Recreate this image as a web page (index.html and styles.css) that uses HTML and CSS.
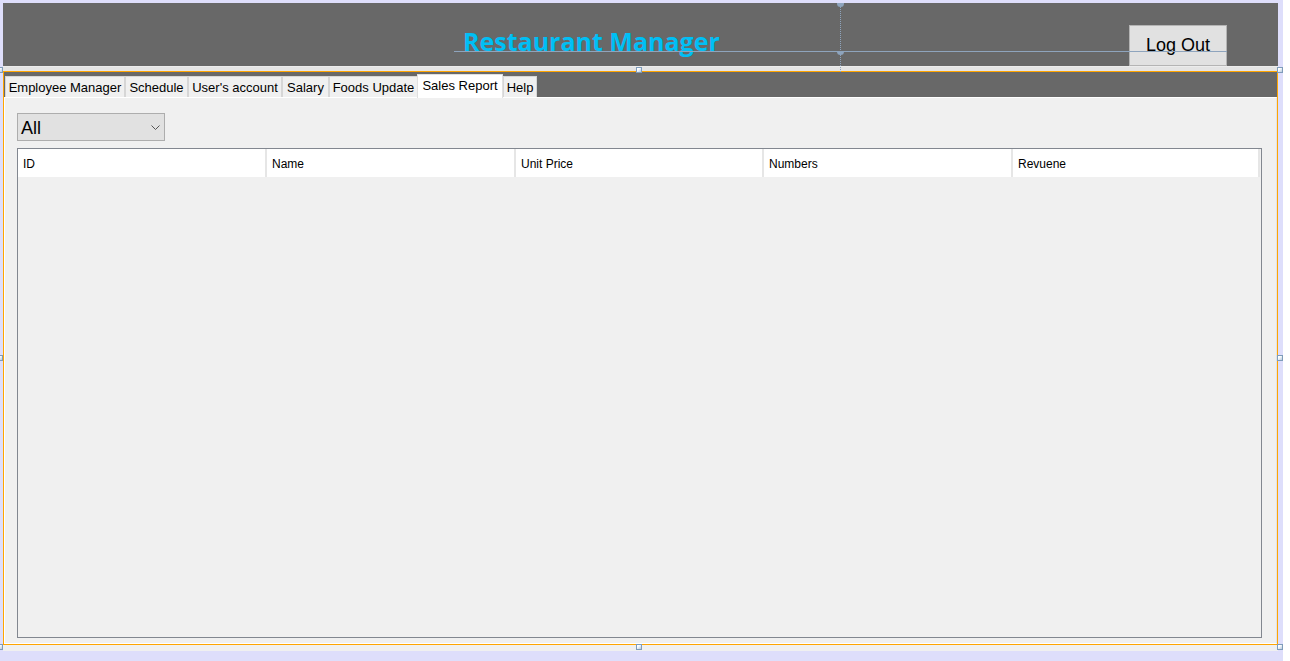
FILE: index.html
```html
<!DOCTYPE html>
<html>
<head>
<meta charset="utf-8">
<title>Restaurant Manager</title>
<link rel="stylesheet" href="styles.css">
</head>
<body>
<div class="designer">
  <div class="form">
    <header class="header">
      <h1 class="title">Restaurant Manager</h1>
      <button class="logout" type="button">Log Out</button>
    </header>
    <div class="band"></div>
    <div class="tabcontrol">
      <div class="tabstrip">
        <div class="tab tab-em">Employee Manager</div>
        <div class="tab tab-sched">Schedule</div>
        <div class="tab tab-user">User's account</div>
        <div class="tab tab-salary">Salary</div>
        <div class="tab tab-foods">Foods Update</div>
        <div class="tab tab-sales active">Sales Report</div>
        <div class="tab tab-help">Help</div>
      </div>
      <div class="tabpage">
        <div class="combo">
          <span class="combo-text">All</span>
          <svg class="chev" width="9" height="5" viewBox="0 0 9 5"><polyline points="0.5,0.5 4.5,4.5 8.5,0.5" fill="none" stroke="#555" stroke-width="1"/></svg>
        </div>
        <div class="grid">
          <div class="grid-head">
            <div class="hcell c1">ID</div>
            <div class="hcell c2">Name</div>
            <div class="hcell c3">Unit Price</div>
            <div class="hcell c4">Numbers</div>
            <div class="hcell c5">Revuene</div>
          </div>
        </div>
      </div>
    </div>
  </div>

  <div class="snap-h"></div>
  <div class="snap-v"></div>
  <div class="snap-dot dot-top"></div>
  <div class="snap-dot dot-mid"></div>

  <div class="handle h-tl"></div>
  <div class="handle h-tm"></div>
  <div class="handle h-tr"></div>
  <div class="handle h-ml"></div>
  <div class="handle h-mr"></div>
  <div class="handle h-bl"></div>
  <div class="handle h-bm"></div>
  <div class="handle h-br"></div>
</div>
</body>
</html>
```
FILE: styles.css
```css
html, body {
  margin: 0;
  padding: 0;
  background: #ffffff;
  overflow: hidden;
}

.designer {
  position: relative;
  width: 1283px;
  height: 661px;
  box-sizing: border-box;
  padding: 3px 0 0 3px;
  background: #dedefb;
  font-family: "Liberation Sans", Arial, sans-serif;
}

.form {
  width: 1275px;
  height: 648px;
  background: #f0f0f0;
  display: flex;
  flex-direction: column;
}

.header {
  height: 63px;
  flex: none;
  background: #686868;
  display: flex;
  align-items: flex-start;
}

.title {
  margin: 26px 0 0 460px;
  font-family: "Open Sans", "Noto Sans", sans-serif;
  font-weight: 700;
  font-size: 25px;
  line-height: 1;
  color: #00bff5;
  white-space: nowrap;
}

.logout {
  margin: 22px 51px 0 auto;
  width: 98px;
  height: 41px;
  padding: 0;
  border: 1px solid #b4b4b4;
  background: #e1e1e1;
  font-family: "Liberation Sans", Arial, sans-serif;
  font-size: 18px;
  color: #000;
}

.band {
  height: 5px;
  flex: none;
  background: #e4e4e4;
  border-top: 1px solid #ececec;
  box-sizing: border-box;
}

.tabcontrol {
  width: 1275px;
  height: 574px;
  flex: none;
  box-sizing: border-box;
  border: 1px solid #ffa500;
  display: flex;
  flex-direction: column;
}

.tabstrip {
  height: 25px;
  flex: none;
  background: #686868;
  display: flex;
  align-items: flex-end;
  padding-left: 1px;
}

.tab {
  height: 21px;
  box-sizing: border-box;
  border: 1px solid #d6d6d6;
  border-bottom: none;
  background: #f0f0f0;
  font-size: 13px;
  line-height: 21px;
  color: #000;
  text-align: center;
  white-space: nowrap;
}

.tab-em { width: 120px; }
.tab-sched { width: 63px; }
.tab-user { width: 94px; }
.tab-salary { width: 47px; }
.tab-foods { width: 89px; }
.tab-help { width: 34px; }

.tab.active {
  width: 86px;
  height: 24px;
  margin-left: -1px;
  margin-bottom: -1px;
  background: #ffffff;
  border-color: #e0e0e0;
  line-height: 21px;
  position: relative;
  z-index: 1;
}

.tabpage {
  flex: 1;
  box-sizing: border-box;
  border: 1px solid #ffffff;
  border-right-color: #e3e3e3;
  background: #f0f0f0;
  padding: 15px 0 0 12px;
}

.combo {
  width: 148px;
  height: 28px;
  box-sizing: border-box;
  border: 1px solid #adadad;
  background: #e1e1e1;
  display: flex;
  align-items: center;
  justify-content: space-between;
  padding: 1px 4px 0 3px;
}

.combo-text {
  font-size: 18px;
  color: #000;
  line-height: 1;
}

.chev {
  display: block;
  margin-top: 0;
}

.grid {
  margin-top: 7px;
  width: 1245px;
  height: 490px;
  box-sizing: border-box;
  border: 1px solid #828790;
  background: #f0f0f0;
}

.grid-head {
  display: grid;
  grid-template-columns: 249px 249px 248px 249px 247px;
  height: 28px;
}

.hcell {
  background: #ffffff;
  border-right: 2px solid #e6e6e6;
  font-size: 12px;
  line-height: 25px;
  padding: 3px 0 0 5px;
  color: #000;
  white-space: nowrap;
}

/* designer overlays */
.snap-h {
  position: absolute;
  left: 454px;
  top: 51px;
  width: 773px;
  height: 1px;
  background: #8ea4bd;
}

.snap-v {
  position: absolute;
  left: 840px;
  top: 3px;
  height: 69px;
  border-left: 1px dotted #8ea4bd;
}

.snap-dot {
  position: absolute;
  width: 7px;
  height: 4px;
  border-radius: 0 0 4px 4px;
  background: #8ea4bd;
}

.dot-top { left: 837px; top: 3px; }
.dot-mid { left: 837px; top: 51px; }

.handle {
  position: absolute;
  width: 6px;
  height: 6px;
  box-sizing: border-box;
  border: 1px solid #7f9cba;
  background: linear-gradient(135deg, #ffffff 30%, #b6c9de);
}

.h-tl { left: -3px; top: 67px; }
.h-tm { left: 636px; top: 67px; }
.h-tr { left: 1277px; top: 67px; }
.h-ml { left: -3px; top: 355px; }
.h-mr { left: 1277px; top: 355px; }
.h-bl { left: -3px; top: 644px; }
.h-bm { left: 636px; top: 644px; }
.h-br { left: 1277px; top: 644px; }
```
